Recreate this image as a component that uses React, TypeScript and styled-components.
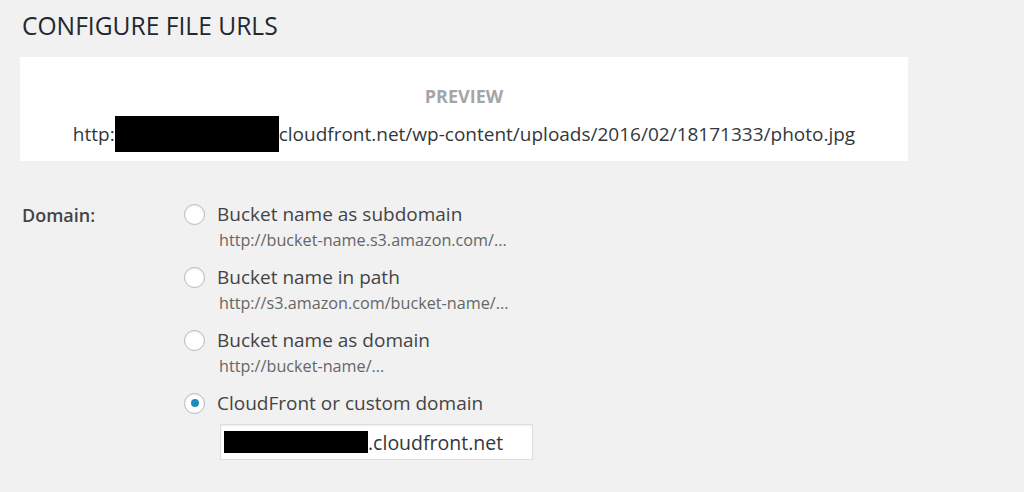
import React from "react";
import styled, { createGlobalStyle } from "styled-components";

const GlobalStyle = createGlobalStyle`
  html, body {
    margin: 0;
    padding: 0;
    background: #f1f1f1;
  }
  body {
    font-family: "Open Sans", "Noto Sans", sans-serif;
    color: #444;
  }
`;

const Page = styled.div`
  width: 1024px;
  height: 492px;
  padding: 6px 0 0 20px;
  box-sizing: border-box;
  overflow: hidden;
`;

const Title = styled.h2`
  margin: 0 0 0 2px;
  font-size: 24.6px;
  line-height: 40px;
  font-weight: 400;
  color: #23282d;
`;

const PreviewBox = styled.div`
  margin-top: 11px;
  width: 888px;
  height: 104px;
  background: #fff;
  display: flex;
  flex-direction: column;
  align-items: center;
  padding-top: 28px;
  box-sizing: border-box;
`;

const PreviewTitle = styled.div`
  font-size: 18px;
  line-height: 22px;
  font-weight: 700;
  color: #a5a5a5;
`;

const PreviewUrl = styled.div`
  margin-top: 9px;
  font-size: 19px;
  line-height: 36px;
  color: #32373c;
  display: flex;
  align-items: center;
`;

const Redacted = styled.span<{ w: number; h: number }>`
  display: inline-block;
  width: ${(p) => p.w}px;
  height: ${(p) => p.h}px;
  background: #000;
`;

const SettingRow = styled.div`
  margin-top: 39px;
  display: grid;
  grid-template-columns: 162px 1fr;
  padding-left: 2px;
`;

const SettingLabel = styled.div`
  font-size: 18px;
  line-height: 28px;
  font-weight: 600;
  color: #444;
  padding-top: 1px;
`;

const Options = styled.div`
  display: flex;
  flex-direction: column;
  gap: 11px;
`;

const Option = styled.div`
  display: flex;
  flex-direction: column;
`;

const OptionMain = styled.label`
  display: flex;
  align-items: center;
  gap: 12px;
  height: 28px;
`;

const Radio = styled.span<{ checked?: boolean }>`
  width: 21px;
  height: 21px;
  border-radius: 50%;
  border: 1px solid #b4b9be;
  background: #fff;
  box-sizing: border-box;
  box-shadow: inset 0 1px 2px rgba(0, 0, 0, 0.07);
  display: flex;
  align-items: center;
  justify-content: center;

  &::after {
    content: "";
    width: 8px;
    height: 8px;
    border-radius: 50%;
    background: #1e8cbe;
    display: ${(p) => (p.checked ? "block" : "none")};
  }
`;

const OptionText = styled.span`
  font-size: 19px;
  line-height: 28px;
  color: #444;
`;

const OptionHint = styled.div`
  margin-left: 35px;
  font-size: 16.2px;
  line-height: 24px;
  color: #666;
`;

const DomainInput = styled.div`
  margin: 7px 0 0 36px;
  width: 313px;
  height: 36px;
  background: #fff;
  border: 1px solid #ddd;
  box-sizing: border-box;
  display: flex;
  align-items: center;
  padding-left: 3px;
  font-size: 19.5px;
  color: #32373c;
  box-shadow: inset 0 1px 2px rgba(0, 0, 0, 0.07);
`;

const options = [
  { label: "Bucket name as subdomain", hint: "http://bucket-name.s3.amazon.com/..." },
  { label: "Bucket name in path", hint: "http://s3.amazon.com/bucket-name/..." },
  { label: "Bucket name as domain", hint: "http://bucket-name/..." },
  { label: "CloudFront or custom domain", checked: true },
];

const App: React.FC = () => {
  return (
    <Page>
      <GlobalStyle />
      <Title>CONFIGURE FILE URLS</Title>
      <PreviewBox>
        <PreviewTitle>PREVIEW</PreviewTitle>
        <PreviewUrl>
          http:
          <Redacted w={164} h={36} />
          cloudfront.net/wp-content/uploads/2016/02/18171333/photo.jpg
        </PreviewUrl>
      </PreviewBox>
      <SettingRow>
        <SettingLabel>Domain:</SettingLabel>
        <Options>
          {options.map((o) => (
            <Option key={o.label}>
              <OptionMain>
                <Radio checked={o.checked} />
                <OptionText>{o.label}</OptionText>
              </OptionMain>
              {o.hint && <OptionHint>{o.hint}</OptionHint>}
              {o.checked && (
                <DomainInput>
                  <Redacted w={144} h={22} />
                  .cloudfront.net
                </DomainInput>
              )}
            </Option>
          ))}
        </Options>
      </SettingRow>
    </Page>
  );
};

export default App;
